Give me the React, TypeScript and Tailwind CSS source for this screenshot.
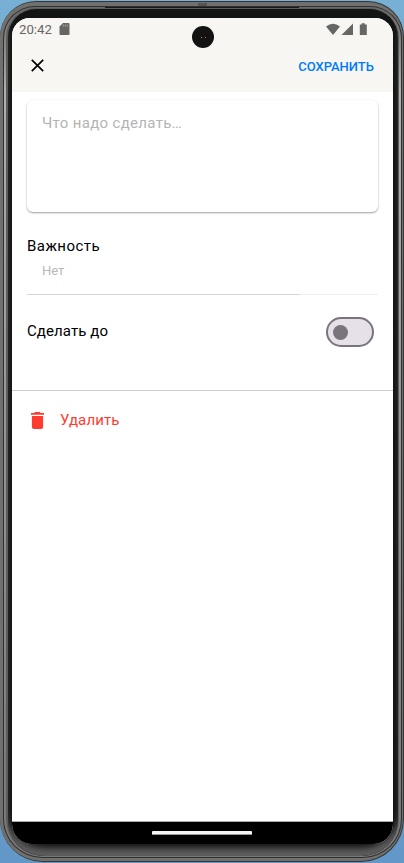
import React from "react";

function StatusBar() {
  return (
    <div className="flex h-[23px] items-center pl-[7px] pr-[25px] text-[#666664]">
      <span className="w-[33px] text-[13.2px] leading-[23px]">20:42</span>
      <svg className="-mt-px ml-[7px]" width="11" height="12" viewBox="0 0 11 12">
        <path d="M4 0H9.5Q10.5 0 10.5 1V11Q10.5 12 9.5 12H1.5Q.5 12 .5 11V3.5Z" fill="#666664" />
        <path d="M4.3 1.5v2M6.3 1.5v2M8.3 1.5v2" stroke="#b5b4b0" strokeWidth=".8" />
      </svg>
      <svg className="-mt-px ml-auto" width="42" height="13" viewBox="0 0 42 13" fill="currentColor">
        <path d="M0 3.4Q7 -2 14 3.4L7 12Z" />
        <path d="M27 .5V12H15.5Z" />
        <path d="M35.7 .2H38.8V1.4H40.8V12H33.8V1.4H35.7Z" />
      </svg>
    </div>
  );
}

function Header() {
  return (
    <div className="h-[74px] shrink-0 bg-[#f7f6f2]">
      <StatusBar />
      <div className="flex h-[50px] items-center justify-between pl-[19px] pr-[19px]">
        <svg className="-mt-px" width="13" height="13" viewBox="0 0 13 13">
          <path d="M.8 .8L12.2 12.2M12.2 .8L.8 12.2" stroke="#000" strokeWidth="1.7" />
        </svg>
        <span className="mt-px text-[13px] font-medium leading-[20px] text-[#007aff]">СОХРАНИТЬ</span>
      </div>
    </div>
  );
}

function Toggle() {
  return (
    <div className="mr-[4px] flex h-[30px] w-[48px] items-center rounded-full border-2 border-[#79747e] bg-[#e6e0e9] pl-[5px]">
      <div className="size-[15px] rounded-full bg-[#79747e]" />
    </div>
  );
}

function Screen() {
  return (
    <div className="flex h-[826px] w-[381px] flex-col overflow-hidden rounded-t-[18px] rounded-b-[20px] bg-white">
      <Header />
      <div className="flex h-[299px] shrink-0 flex-col border-b border-[#cfcfcf] px-[15px] pt-[8px]">
        <div className="h-[112px] shrink-0 rounded-[6px] bg-white px-[15px] pt-[13px] text-[15px] leading-[20px] tracking-[0.32px] text-[#b4b4b4] shadow-[0_1px_2px_rgba(0,0,0,0.38)]">
          Что надо сделать…
        </div>
        <div className="mt-[24px] text-[15px] leading-[20px] tracking-[0.45px] text-black">Важность</div>
        <div className="mt-[6px] pl-[15px] text-[13px] leading-[18px] text-[#b8b8b8]">Нет</div>
        <div className="mt-[14px] flex h-px shrink-0">
          <div className="w-[273px] bg-[#d6d6d6]" />
          <div className="flex-1 bg-[#eeeeee]" />
        </div>
        <div className="mt-[22px] flex items-center justify-between">
          <span className="-mt-[2px] text-[15px] leading-[20px] tracking-[0.1px] text-black">Сделать до</span>
          <Toggle />
        </div>
      </div>
      <div className="flex h-[58px] shrink-0 items-center pl-[19px] text-[#ff3b30]">
        <svg width="13" height="17" viewBox="0 0 13 17" fill="currentColor">
          <path d="M4.2 0H8.8L9.7 1H13V2.8H0V1H3.3ZM.9 4H12.1V15Q12.1 17 10.2 17H2.8Q.9 17 .9 15Z" />
        </svg>
        <span className="ml-[16px] text-[15px] leading-[20px] tracking-[0.12px]">Удалить</span>
      </div>
      <div className="flex-1" />
      <div className="flex h-[23px] shrink-0 justify-center border-t border-[#aaa] bg-black pr-px pt-[9px]">
        <div className="h-[4px] w-[100px] rounded-[1px] border-b border-[#999] bg-[#f5f5f5]" />
      </div>
    </div>
  );
}

export default function App() {
  return (
    <div
      className="relative h-[863px] w-[404px] overflow-hidden bg-linear-to-b from-[#78b0d5] via-[#6a8faa] to-[#6298c8] pt-px"
      style={{ fontFamily: "Roboto, 'Noto Sans', sans-serif" }}
    >
      <div className="h-[861px] rounded-t-[36px] rounded-b-[43px] bg-[#353535] py-px pr-px">
        <div className="h-[859px] rounded-t-[35px] rounded-b-[42px] bg-[#70716f] pl-[3px] pr-px pt-[4px] pb-[3px]">
          <div className="h-[852px] rounded-t-[32px] rounded-b-[39px] bg-[#303030] pl-px pr-px pt-px pb-px">
            <div className="h-[850px] rounded-t-[31px] rounded-b-[38px] bg-linear-to-b from-[#686968] via-[#b0b0b0] via-10% to-[#777] pl-[2px] pr-[2px] pt-px pb-px">
              <div className="h-[848px] rounded-t-[30px] rounded-b-[37px] bg-[#5c5c5c] pl-[2px] pr-px pt-px">
                <div className="h-[847px] rounded-t-[28px] rounded-b-[36px] bg-[#131414] pl-[4px] pr-[5px] pt-[9px] shadow-[inset_0_-10px_6px_-2px_#5c5c5c]">
                  <Screen />
                </div>
              </div>
            </div>
          </div>
        </div>
      </div>
      <div className="absolute left-[192px] top-[26px] flex size-[22px] items-center justify-center gap-[3px] rounded-full bg-[#131313]">
        <span className="size-px bg-[#9a9a55]" />
        <span className="size-px bg-[#d55438]" />
      </div>
      <div className="absolute left-[198px] top-[3px] h-[3px] w-[9px] bg-[#555654]" />
      <div className="absolute left-[105px] top-[7px] h-px w-[194px] bg-[#191919]" />
    </div>
  );
}
